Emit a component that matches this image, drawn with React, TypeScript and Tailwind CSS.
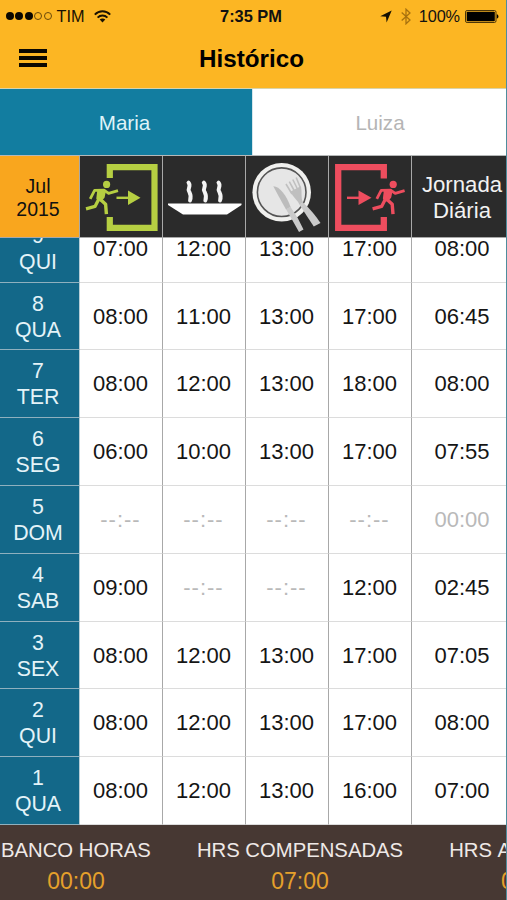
import type { ReactNode } from "react";

const EMPTY = "--:--";

const rows = [
  { day: "9", week: "QUI", times: ["07:00", "12:00", "13:00", "17:00", "08:00"] },
  { day: "8", week: "QUA", times: ["08:00", "11:00", "13:00", "17:00", "06:45"] },
  { day: "7", week: "TER", times: ["08:00", "12:00", "13:00", "18:00", "08:00"] },
  { day: "6", week: "SEG", times: ["06:00", "10:00", "13:00", "17:00", "07:55"] },
  { day: "5", week: "DOM", times: [EMPTY, EMPTY, EMPTY, EMPTY, "00:00"] },
  { day: "4", week: "SAB", times: ["09:00", EMPTY, EMPTY, "12:00", "02:45"] },
  { day: "3", week: "SEX", times: ["08:00", "12:00", "13:00", "17:00", "07:05"] },
  { day: "2", week: "QUI", times: ["08:00", "12:00", "13:00", "17:00", "08:00"] },
  { day: "1", week: "QUA", times: ["08:00", "12:00", "13:00", "16:00", "07:00"] },
];

const GRID = "grid grid-cols-[80px_83px_83px_83px_83px_95px]";

function WifiIcon() {
  return (
    <svg className="ml-[9px] h-[13px] w-[17px]" viewBox="0 0 17 13" fill="none" stroke="#1a1202" strokeWidth="2">
      <path d="M0.8 4.6C5.2 .2 11.8 .2 16.2 4.6" />
      <path d="M3.6 7.6C6.4 4.8 10.6 4.8 13.4 7.6" />
      <path d="M8.5 12.4L5.7 9.6C7.2 8.1 9.8 8.1 11.3 9.6Z" fill="#1a1202" stroke="none" />
    </svg>
  );
}

function StatusRight() {
  return (
    <div className="flex h-8 items-center justify-end pr-[7px]">
      <svg className="h-[13px] w-[12px]" viewBox="0 0 12 13">
        <path d="M11.7 .5L6.6 12.5L6 6.7L.2 6.2Z" fill="#151002" />
      </svg>
      <svg className="ml-[9px] h-[17px] w-[10px]" viewBox="0 0 10 17" fill="none" stroke="#a8720f" strokeWidth="1.3">
        <path d="M.7 4.5L9 12L5 15.8V1.2L9 5L.7 12.5" />
      </svg>
      <span className="ml-[8px] text-[16.3px] tracking-[-0.1px]">100%</span>
      <svg className="ml-[5px] h-[13px] w-[34px]" viewBox="0 0 34 13">
        <rect x=".5" y=".5" width="30.5" height="12" rx="1.6" fill="none" stroke="#4b3508" />
        <rect x="1.7" y="1.7" width="28.1" height="9.6" rx=".8" fill="#000" />
        <path d="M31.8 4.3C34 5 34 8 31.8 8.7Z" fill="#000" />
      </svg>
    </div>
  );
}

function Runner() {
  return (
    <g strokeLinejoin="round">
      <circle cx="26.6" cy="28.4" r="3.6" fill="currentColor" stroke="none" />
      <path d="M10.2 42.8L14.6 34.3L24 34.2L28.6 37.4L38 34.6" strokeWidth="2.8" />
      <path d="M18.6 34.3L24.6 35L23.4 41L20.4 44.2L17.6 42.4Z" fill="currentColor" strokeWidth="2.6" />
      <path d="M18.6 43.5L15 50.4L6 52.8" strokeWidth="3.3" />
      <path d="M20.2 43.2L25.6 48.2L26.4 58.2" strokeWidth="3.4" />
    </g>
  );
}

function EnterIcon() {
  return (
    <svg className="block h-[81px] w-[82px] text-[#b6cf42]" viewBox="0 0 82 81" fill="none" stroke="currentColor">
      <path d="M29.8 22V11.2H74.5V71.8H29.8V61" strokeWidth="6.2" />
      <path d="M36.5 41.8H50" strokeWidth="2.4" />
      <path d="M48 34.5L60.5 41.8L48 49Z" fill="currentColor" stroke="none" />
      <Runner />
    </svg>
  );
}

function ExitIcon() {
  return (
    <svg className="block h-[81px] w-[82px] text-[#ee4d5e]" viewBox="0 0 82 81" fill="none" stroke="currentColor">
      <path d="M54.8 22.5V11.2H9.2V71.8H54.8V61" strokeWidth="6.3" />
      <path d="M18 41.8H31" strokeWidth="2.4" />
      <path d="M29.5 34.5L42.5 41.8L29.5 49Z" fill="currentColor" stroke="none" />
      <g transform="translate(37.6 0)">
        <Runner />
      </g>
    </svg>
  );
}

function SteamIcon() {
  return (
    <svg className="block h-[81px] w-[82px]" viewBox="0 0 82 81">
      <path d="M5 47.5H78.5V49L64 58.5H20L5 49Z" fill="#fff" />
      {[26.5, 41.8, 56.5].map((x) => (
        <path
          key={x}
          d={`M${x - 1} 26.6C${x + 2} 30 ${x - 2} 32 ${x - 0.6} 35C${x + 0.8} 38 ${x + 2.4} 40 ${x + 0.5} 44.4`}
          fill="none"
          stroke="#f4f4f4"
          strokeWidth="3.9"
          strokeLinecap="round"
        />
      ))}
    </svg>
  );
}

function PlateIcon() {
  return (
    <svg className="block h-[81px] w-[82px]" viewBox="0 0 82 81">
      <circle cx="35.7" cy="36.2" r="29.3" fill="#f0f0ee" />
      <circle cx="35.7" cy="36.2" r="24.3" fill="#e6e6e6" stroke="#555" strokeWidth="1.6" />
      <path d="M27.3 30.3C33 30 40.5 39 44.6 51L40 53.5Q34 43 27.3 30.3Z" fill="#bcbcbc" />
      <path d="M40 53.2L44.4 50.8Q52.5 62 57.5 73.5L53 76Q47 65 40 53.2Z" fill="#cacaca" />
      <path d="M40 28L46 38M43.3 25.7L49 36M46.8 23.5L51.7 33.5M50.2 21.5L54.5 32" stroke="#c0c0c0" strokeWidth="1.6" fill="none" />
      <path d="M44.6 35.6L54.8 30.2C56.5 36 54.5 41 57 46.5L53.4 48.8C51.5 43.5 47 42 44.6 35.6Z" fill="#bfbfbf" />
      <path d="M53.4 48.6L57 46.5Q67 55.5 74.5 67L67.8 70.6Q61 60.5 53.4 48.6Z" fill="#cacaca" />
    </svg>
  );
}

function HeaderCell({ children }: { children: ReactNode }) {
  return <div className="flex items-center justify-center overflow-hidden border-r border-[#a8a8a8]">{children}</div>;
}

function Summary({ label, value }: { label: string; value: string }) {
  return (
    <div className="flex shrink-0 flex-col items-center whitespace-nowrap">
      <span className="text-[20.3px] leading-[26px] text-[#efe9e7]">{label}</span>
      <span className="mt-[4px] text-[23px] leading-[28px] text-[#e5a02b]">{value}</span>
    </div>
  );
}

export default function App() {
  return (
    <div className="h-[900px] w-[507px] overflow-hidden bg-[#4e8d9d] pr-px font-['Liberation_Sans',Arial,sans-serif] text-[#111] [font-kerning:none]">
      <div className="flex h-[900px] w-[506px] flex-col overflow-hidden bg-white">
        <header className="h-[88px] shrink-0 bg-[#fcb623]">
          <div className="grid h-8 grid-cols-[190px_122px_194px] items-center">
            <div className="flex h-8 items-center pl-[6px]">
              <div className="flex gap-[1.4px]">
                {[0, 1, 2].map((i) => (
                  <i key={i} className="size-[8px] rounded-full bg-[#0b0801]" />
                ))}
                {[3, 4].map((i) => (
                  <i key={i} className="size-[8px] rounded-full border border-[#69490a]" />
                ))}
              </div>
              <span className="ml-[5px] text-[16.3px] text-[#1a1202]">TIM</span>
              <WifiIcon />
            </div>
            <div className="text-center text-[16.4px] font-bold">7:35 PM</div>
            <StatusRight />
          </div>
          <div className="grid h-[54px] grid-cols-[66px_1fr_66px] items-center">
            <button aria-label="Menu" className="ml-[19px] flex w-[28px] flex-col gap-[3px] pb-[2px]">
              <i className="h-1 bg-[#0b0801]" />
              <i className="h-1 bg-[#0b0801]" />
              <i className="h-1 bg-[#0b0801]" />
            </button>
            <h1 className="pr-[3px] text-center text-[24.2px] leading-[30px] font-bold text-black">Histórico</h1>
          </div>
        </header>

        <nav className="grid h-[68px] shrink-0 grid-cols-[252px_1fr] border-t border-b border-t-[#d9d3a8] border-b-[#b5b8b8] text-[20.6px]">
          <div className="flex items-center justify-center bg-[#127da0] pr-[3px] pt-[2px] text-[#dff3f8]">Maria</div>
          <div className="flex items-center justify-center border-l border-[#d5e6eb] pl-px pt-[2px] text-[#b5b5b5]">Luiza</div>
        </nav>

        <div className={`${GRID} h-[82px] shrink-0 border-b border-[#a8a8a8] bg-[#2b2b2b]`}>
          <div className="flex flex-col items-center justify-center border-r border-[#a8a8a8] bg-[#f9a61e] pr-[3px] pt-[3px] text-[19.5px] leading-[23px]">
            <span>Jul</span>
            <span>2015</span>
          </div>
          <HeaderCell><EnterIcon /></HeaderCell>
          <HeaderCell><SteamIcon /></HeaderCell>
          <HeaderCell><PlateIcon /></HeaderCell>
          <HeaderCell><ExitIcon /></HeaderCell>
          <div className="flex flex-col items-center justify-center pl-[5px] pt-[3px] text-[22.2px] leading-[26px] text-[#f2f2f2]">
            <span>Jornada</span>
            <span>Diária</span>
          </div>
        </div>

        <main className="flex h-[587px] shrink-0 flex-col justify-end overflow-hidden">
          {rows.map((row) => (
            <div key={row.day} className={`${GRID} h-[67.8px] shrink-0`}>
              <div className="flex flex-col items-center justify-center border-r border-b border-r-[#b8ced6] border-b-[#8fb0be] bg-[#136889] pr-[3px] pt-px text-[21.3px] leading-[26px] text-[#e4f3f8]">
                <span>{row.day}</span>
                <span>{row.week}</span>
              </div>
              {row.times.map((time, i) => (
                <div
                  key={i}
                  className={`flex items-center justify-center border-b border-b-[#dcdcdc] text-[22px] ${
                    i < 4 ? "border-r border-r-[#a8a8a8] pr-px" : "pl-[5px]"
                  } ${time === EMPTY ? "tracking-[1px]" : ""} ${
                    row.day === "5" || time === EMPTY ? "text-[#b9b9b9]" : "text-[#151515]"
                  }`}
                >
                  {time}
                </div>
              ))}
            </div>
          ))}
        </main>

        <footer className="flex h-[75px] shrink-0 gap-[46px] overflow-hidden bg-[#473833] pl-px pt-[12px]">
          <Summary label="BANCO HORAS" value="00:00" />
          <Summary label="HRS COMPENSADAS" value="07:00" />
          <Summary label="HRS ABONADAS" value="00:00" />
        </footer>
      </div>
    </div>
  );
}
